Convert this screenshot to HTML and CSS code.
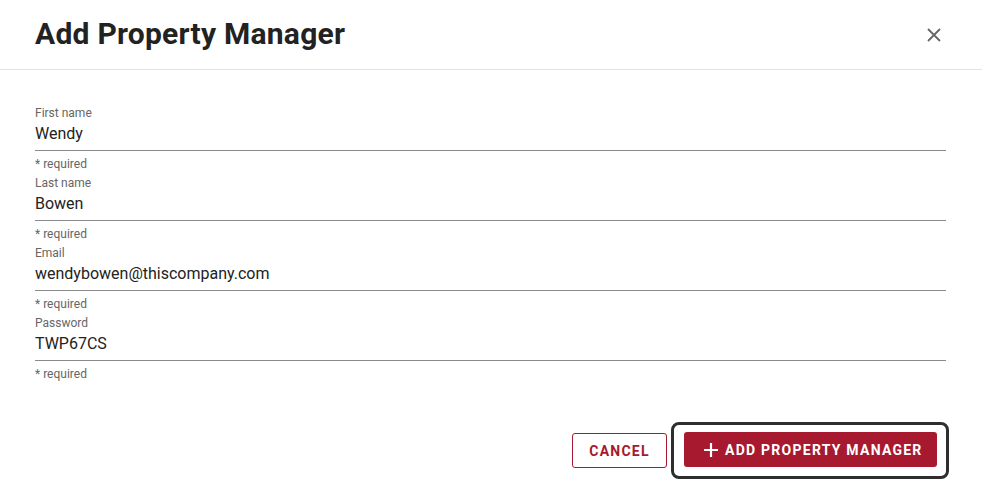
FILE: index.html
```html
<!DOCTYPE html>
<html lang="en">
<head>
<meta charset="utf-8">
<title>Add Property Manager</title>
<link rel="stylesheet" href="styles.css">
</head>
<body>
<div class="dialog">
  <header class="dialog-header">
    <h1 class="dialog-title">Add Property Manager</h1>
    <button class="close-btn" aria-label="Close">
      <svg width="14" height="14" viewBox="0 0 14 14"><path d="M1 1L13 13M13 1L1 13" stroke="#666" stroke-width="1.8" fill="none"/></svg>
    </button>
  </header>
  <form class="dialog-body">
    <div class="field">
      <label class="field-label">First name</label>
      <div class="field-input">Wendy</div>
      <div class="field-help">* required</div>
    </div>
    <div class="field">
      <label class="field-label">Last name</label>
      <div class="field-input">Bowen</div>
      <div class="field-help">* required</div>
    </div>
    <div class="field">
      <label class="field-label">Email</label>
      <div class="field-input">wendybowen@thiscompany.com</div>
      <div class="field-help">* required</div>
    </div>
    <div class="field">
      <label class="field-label">Password</label>
      <div class="field-input">TWP67CS</div>
      <div class="field-help">* required</div>
    </div>
  </form>
  <footer class="dialog-footer">
    <button class="btn btn-outline">CANCEL</button>
    <span class="focus-ring">
      <button class="btn btn-primary">
        <svg class="plus" width="14" height="14" viewBox="0 0 14 14"><path d="M7 0V14M0 7H14" stroke="#fff" stroke-width="2.2" fill="none"/></svg>
        ADD PROPERTY MANAGER
      </button>
    </span>
  </footer>
</div>
</body>
</html>
```
FILE: styles.css
```css
* { box-sizing: border-box; }
html, body { margin: 0; padding: 0; background: #fff; }
body { font-family: Roboto, "Liberation Sans", Arial, sans-serif; color: #222; }

.dialog { width: 982px; }

.dialog-header {
  height: 70px;
  display: flex;
  align-items: center;
  justify-content: space-between;
  padding: 0 41px 0 35px;
  border-bottom: 1px solid #e2e2e2;
}
.dialog-title {
  margin: 0;
  font-size: 30px;
  font-weight: 700;
  color: #222;
  letter-spacing: 0.25px;
  line-height: 1;
  padding-bottom: 2px;
}
.close-btn {
  background: none;
  border: 0;
  padding: 0;
  width: 14px;
  height: 14px;
  display: flex;
  cursor: pointer;
}

.dialog-body {
  padding: 35px 36px 0 35px;
  display: flex;
  flex-direction: column;
  gap: 3px;
}
.field { display: flex; flex-direction: column; }
.field-label {
  font-size: 12px;
  line-height: 16px;
  color: #666;
}
.field-input {
  font-size: 16px;
  line-height: 24px;
  color: #222;
  padding: 1px 0 4px;
  border-bottom: 1px solid #8a8a8a;
}
.field-help {
  font-size: 12px;
  line-height: 16px;
  color: #666;
  margin-top: 5px;
}

.dialog-footer {
  display: flex;
  justify-content: flex-end;
  align-items: center;
  gap: 4px;
  padding: 40px 33px 0 0;
}
.btn {
  font-family: inherit;
  font-size: 14px;
  font-weight: 700;
  letter-spacing: 1.25px;
  height: 35px;
  border-radius: 3px;
  display: inline-flex;
  align-items: center;
  cursor: pointer;
}
.btn-outline {
  width: 95px;
  justify-content: center;
  background: #fff;
  color: #a6192e;
  border: 1px solid #a6192e;
  padding: 0;
}
.focus-ring {
  display: inline-flex;
  border: 3px solid #2e2e2e;
  border-radius: 8px;
  padding: 7px 9px 9px 10px;
}
.btn-primary {
  width: 253px;
  background: #a6192e;
  color: #fff;
  border: 0;
  padding: 0 0 0 20px;
  gap: 7px;
}
.plus { flex: none; }
```
